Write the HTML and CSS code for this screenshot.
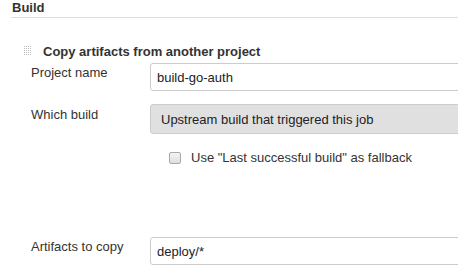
FILE: index.html
```html
<!DOCTYPE html>
<html>
<head>
    <title>Build</title>
    <link rel="stylesheet" href="styles.css">
</head>
<body>
    <div class="section-header">Build</div>

    <div class="builder">
        <div class="builder-title">
            <span class="handle"></span>
            <span>Copy artifacts from another project</span>
        </div>

        <div class="row row-project">
            <div class="label">Project name</div>
            <div class="field"><input class="text-input" type="text" value="build-go-auth"></div>
        </div>

        <div class="row row-which">
            <div class="label">Which build</div>
            <div class="field"><button class="select-btn">Upstream build that triggered this job</button></div>
        </div>

        <div class="row row-check">
            <div class="label"></div>
            <div class="field">
                <label class="check"><span class="box"></span>Use "Last successful build" as fallback</label>
            </div>
        </div>

        <div class="row row-artifacts">
            <div class="label">Artifacts to copy</div>
            <div class="field"><input class="text-input" type="text" value="deploy/*"></div>
        </div>
    </div>
</body>
</html>
```

FILE: styles.css
```css
body {
    margin: 0;
    font-family: "Liberation Sans", Arial, sans-serif;
    font-size: 13px;
    color: #333;
    background: #fff;
    overflow: hidden;
}
.section-header {
    margin-left: 11px;
    padding: 0 0 0 1px;
    height: 17px;
    line-height: 15px;
    font-weight: bold;
    border-bottom: 1px solid #ddd;
}
.builder {
    padding-top: 26px;
}
.builder-title {
    display: flex;
    align-items: center;
    height: 14px;
    padding-left: 23px;
    font-weight: bold;
    font-size: 13px;
}
.handle {
    width: 9px;
    height: 10px;
    margin-right: 11px;
    background-image: conic-gradient(#bbb 25%, transparent 0);
    background-size: 2px 2px;
}
.row {
    display: flex;
}
.label {
    width: 119px;
    padding-left: 31px;
    flex-shrink: 0;
}
.field {
    flex: 1;
}
.row-project {
    margin-top: 5px;
}
.row-project .label {
    padding-top: 2px;
}
.text-input {
    box-sizing: border-box;
    width: 320px;
    height: 28px;
    padding: 0 6px;
    border: 1px solid #ccc;
    border-radius: 3px;
    font-family: "Liberation Sans", Arial, sans-serif;
    font-size: 13px;
    color: #222;
    background: #fff;
}
.row-which {
    margin-top: 13px;
}
.row-which .label {
    padding-top: 3px;
}
.select-btn {
    box-sizing: border-box;
    width: 320px;
    height: 30px;
    padding: 0 10px;
    text-align: left;
    border: 1px solid #ccc;
    border-radius: 3px;
    background: #e0e0e0;
    font-family: "Liberation Sans", Arial, sans-serif;
    font-size: 13px;
    color: #222;
}
.row-check {
    margin-top: 17px;
}
.check {
    display: flex;
    align-items: center;
    padding-left: 19px;
    height: 13px;
}
.box {
    box-sizing: border-box;
    width: 12px;
    height: 12px;
    margin-right: 10px;
    border: 1px solid #aaa;
    border-radius: 2px;
    background: linear-gradient(#f4f4f4, #dedede);
}
.row-artifacts {
    margin-top: 73px;
}
.row-artifacts .label {
    padding-top: 2px;
}
```
